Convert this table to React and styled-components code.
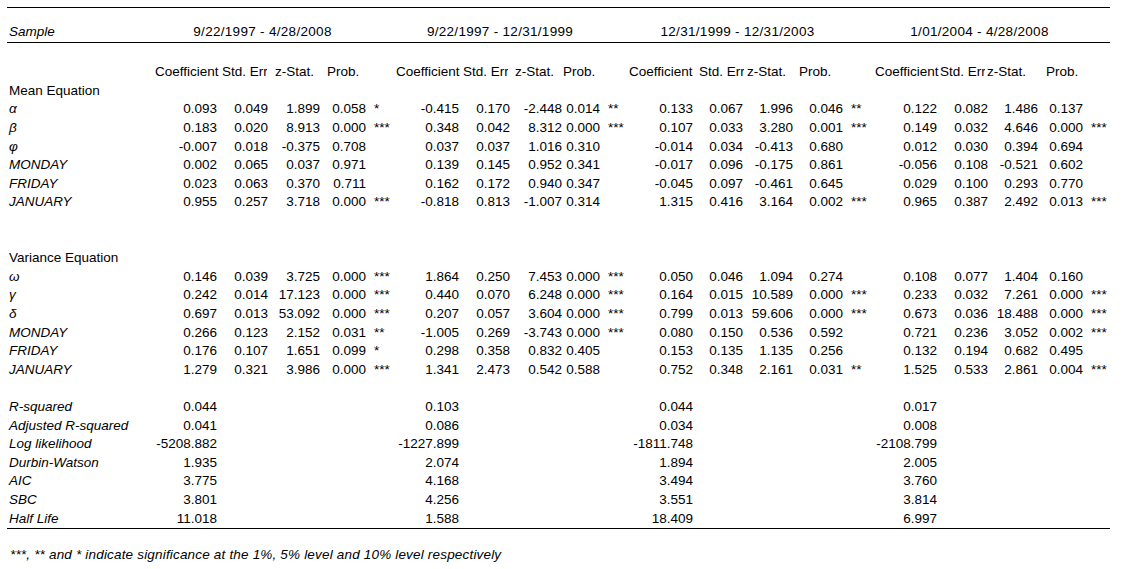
import React from 'react'
import styled, { createGlobalStyle } from 'styled-components'

const GlobalStyle = createGlobalStyle`
  body {
    margin: 0;
    background: #ffffff;
    color: #000000;
    font-family: "Liberation Sans", Arial, sans-serif;
    font-size: 13.5px;
  }
`

// column widths, measured off the sheet
const MAIN_COLS = '146px 67px 51px 52px 46px 25px 68px 51px 52px 38px 23px 70px 50px 50px 50px 24px 70px 51px 50px 45px 24px'
const HEAD_COLS = '148px 67px 53px 52px 69px 67px 52px 48px 66px 70px 48px 52px 76px 65px 47px 59px 64px'
const ROW_H = '18.6px'

const Page = styled.div`
  padding: 7px 0 0 7px;
  width: 1103px;
`

const Table = styled.div`
  border-top: 1px solid #000;
  border-bottom: 1px solid #000;
  display: flex;
  flex-direction: column;
`

const SampleRow = styled.div`
  display: grid;
  grid-template-columns: ${MAIN_COLS};
  height: 34px;
  align-items: end;
  line-height: ${ROW_H};
  border-bottom: 1px solid #000;
`

const Period = styled.div`
  grid-column: span 4;
  text-align: center;
  padding-left: 3px;
  letter-spacing: 0.3px;
  white-space: nowrap;
`

const HeaderRow = styled.div`
  display: grid;
  grid-template-columns: ${HEAD_COLS};
  height: ${ROW_H};
  line-height: ${ROW_H};
  margin-top: 20.3px;
`

const HeadCell = styled.div`
  white-space: nowrap;
`

const HeadText = styled.span`
  display: inline-block;
  overflow: hidden;
  vertical-align: top;
  max-width: ${p => (p.$clip ? `${p.$clip}px` : 'none')};
`

const Row = styled.div`
  display: grid;
  grid-template-columns: ${MAIN_COLS};
  height: ${ROW_H};
  line-height: ${ROW_H};
  white-space: nowrap;
`

const Gap = styled.div`
  height: calc(${ROW_H} * ${p => p.$rows});
`

const Label = styled.div`
  padding-left: 2px;
  font-style: ${p => (p.$plain ? 'normal' : 'italic')};
`

const Num = styled.div`
  text-align: right;
  padding-right: 3px;
`

const Stars = styled.div`
  padding-left: 5px;
`

const Note = styled.div`
  font-style: italic;
  line-height: ${ROW_H};
  letter-spacing: 0.18px;
  padding-left: 3px;
  margin-top: 16.7px;
`

const periods = [
  '9/22/1997 - 4/28/2008',
  '9/22/1997 - 12/31/1999',
  '12/31/1999 - 12/31/2003',
  '1/01/2004 - 4/28/2008',
]

const mean = [
  ['α', [['0.093', '0.049', '1.899', '0.058', '*'], ['-0.415', '0.170', '-2.448', '0.014', '**'], ['0.133', '0.067', '1.996', '0.046', '**'], ['0.122', '0.082', '1.486', '0.137', '']]],
  ['β', [['0.183', '0.020', '8.913', '0.000', '***'], ['0.348', '0.042', '8.312', '0.000', '***'], ['0.107', '0.033', '3.280', '0.001', '***'], ['0.149', '0.032', '4.646', '0.000', '***']]],
  ['φ', [['-0.007', '0.018', '-0.375', '0.708', ''], ['0.037', '0.037', '1.016', '0.310', ''], ['-0.014', '0.034', '-0.413', '0.680', ''], ['0.012', '0.030', '0.394', '0.694', '']]],
  ['MONDAY', [['0.002', '0.065', '0.037', '0.971', ''], ['0.139', '0.145', '0.952', '0.341', ''], ['-0.017', '0.096', '-0.175', '0.861', ''], ['-0.056', '0.108', '-0.521', '0.602', '']]],
  ['FRIDAY', [['0.023', '0.063', '0.370', '0.711', ''], ['0.162', '0.172', '0.940', '0.347', ''], ['-0.045', '0.097', '-0.461', '0.645', ''], ['0.029', '0.100', '0.293', '0.770', '']]],
  ['JANUARY', [['0.955', '0.257', '3.718', '0.000', '***'], ['-0.818', '0.813', '-1.007', '0.314', ''], ['1.315', '0.416', '3.164', '0.002', '***'], ['0.965', '0.387', '2.492', '0.013', '***']]],
]

const variance = [
  ['ω', [['0.146', '0.039', '3.725', '0.000', '***'], ['1.864', '0.250', '7.453', '0.000', '***'], ['0.050', '0.046', '1.094', '0.274', ''], ['0.108', '0.077', '1.404', '0.160', '']]],
  ['γ', [['0.242', '0.014', '17.123', '0.000', '***'], ['0.440', '0.070', '6.248', '0.000', '***'], ['0.164', '0.015', '10.589', '0.000', '***'], ['0.233', '0.032', '7.261', '0.000', '***']]],
  ['δ', [['0.697', '0.013', '53.092', '0.000', '***'], ['0.207', '0.057', '3.604', '0.000', '***'], ['0.799', '0.013', '59.606', '0.000', '***'], ['0.673', '0.036', '18.488', '0.000', '***']]],
  ['MONDAY', [['0.266', '0.123', '2.152', '0.031', '**'], ['-1.005', '0.269', '-3.743', '0.000', '***'], ['0.080', '0.150', '0.536', '0.592', ''], ['0.721', '0.236', '3.052', '0.002', '***']]],
  ['FRIDAY', [['0.176', '0.107', '1.651', '0.099', '*'], ['0.298', '0.358', '0.832', '0.405', ''], ['0.153', '0.135', '1.135', '0.256', ''], ['0.132', '0.194', '0.682', '0.495', '']]],
  ['JANUARY', [['1.279', '0.321', '3.986', '0.000', '***'], ['1.341', '2.473', '0.542', '0.588', ''], ['0.752', '0.348', '2.161', '0.031', '**'], ['1.525', '0.533', '2.861', '0.004', '***']]],
]

const stats = [
  ['R-squared', ['0.044', '0.103', '0.044', '0.017']],
  ['Adjusted R-squared', ['0.041', '0.086', '0.034', '0.008']],
  ['Log likelihood', ['-5208.882', '-1227.899', '-1811.748', '-2108.799']],
  ['Durbin-Watson', ['1.935', '2.074', '1.894', '2.005']],
  ['AIC', ['3.775', '4.168', '3.494', '3.760']],
  ['SBC', ['3.801', '4.256', '3.551', '3.814']],
  ['Half Life', ['11.018', '1.588', '18.409', '6.997']],
]

const EstimateRow = ({ name, groups }) => (
  <Row>
    <Label>{name}</Label>
    {groups.map((g, i) => (
      <React.Fragment key={i}>
        <Num>{g[0]}</Num>
        <Num>{g[1]}</Num>
        <Num>{g[2]}</Num>
        <Num>{g[3]}</Num>
        <Stars>{g[4]}</Stars>
      </React.Fragment>
    ))}
  </Row>
)

const StatRow = ({ name, values }) => (
  <Row>
    <Label>{name}</Label>
    {values.map((v, i) => (
      <React.Fragment key={i}>
        <Num>{v}</Num>
        <div />
        <div />
        <div />
        <div />
      </React.Fragment>
    ))}
  </Row>
)

export default function App() {
  return (
    <Page>
      <GlobalStyle />
      <Table>
        <SampleRow>
          <Label>Sample</Label>
          {periods.map(p => (
            <React.Fragment key={p}>
              <Period>{p}</Period>
              <div />
            </React.Fragment>
          ))}
        </SampleRow>

        <HeaderRow>
          <div />
          {periods.map(p => (
            <React.Fragment key={p}>
              <HeadCell>Coefficient</HeadCell>
              <HeadCell><HeadText $clip={45}>Std. Err</HeadText></HeadCell>
              <HeadCell>z-Stat.</HeadCell>
              <HeadCell>Prob.</HeadCell>
            </React.Fragment>
          ))}
        </HeaderRow>

        <Row><Label $plain>Mean Equation</Label></Row>
        {mean.map(([name, groups], i) => <EstimateRow key={i} name={name} groups={groups} />)}

        <Gap $rows={2} />
        <Row><Label $plain>Variance Equation</Label></Row>
        {variance.map(([name, groups], i) => <EstimateRow key={i} name={name} groups={groups} />)}

        <Gap $rows={1} />
        {stats.map(([name, values]) => <StatRow key={name} name={name} values={values} />)}
      </Table>
      <Note>***, ** and * indicate significance at the 1%, 5% level and 10% level respectively</Note>
    </Page>
  )
}
